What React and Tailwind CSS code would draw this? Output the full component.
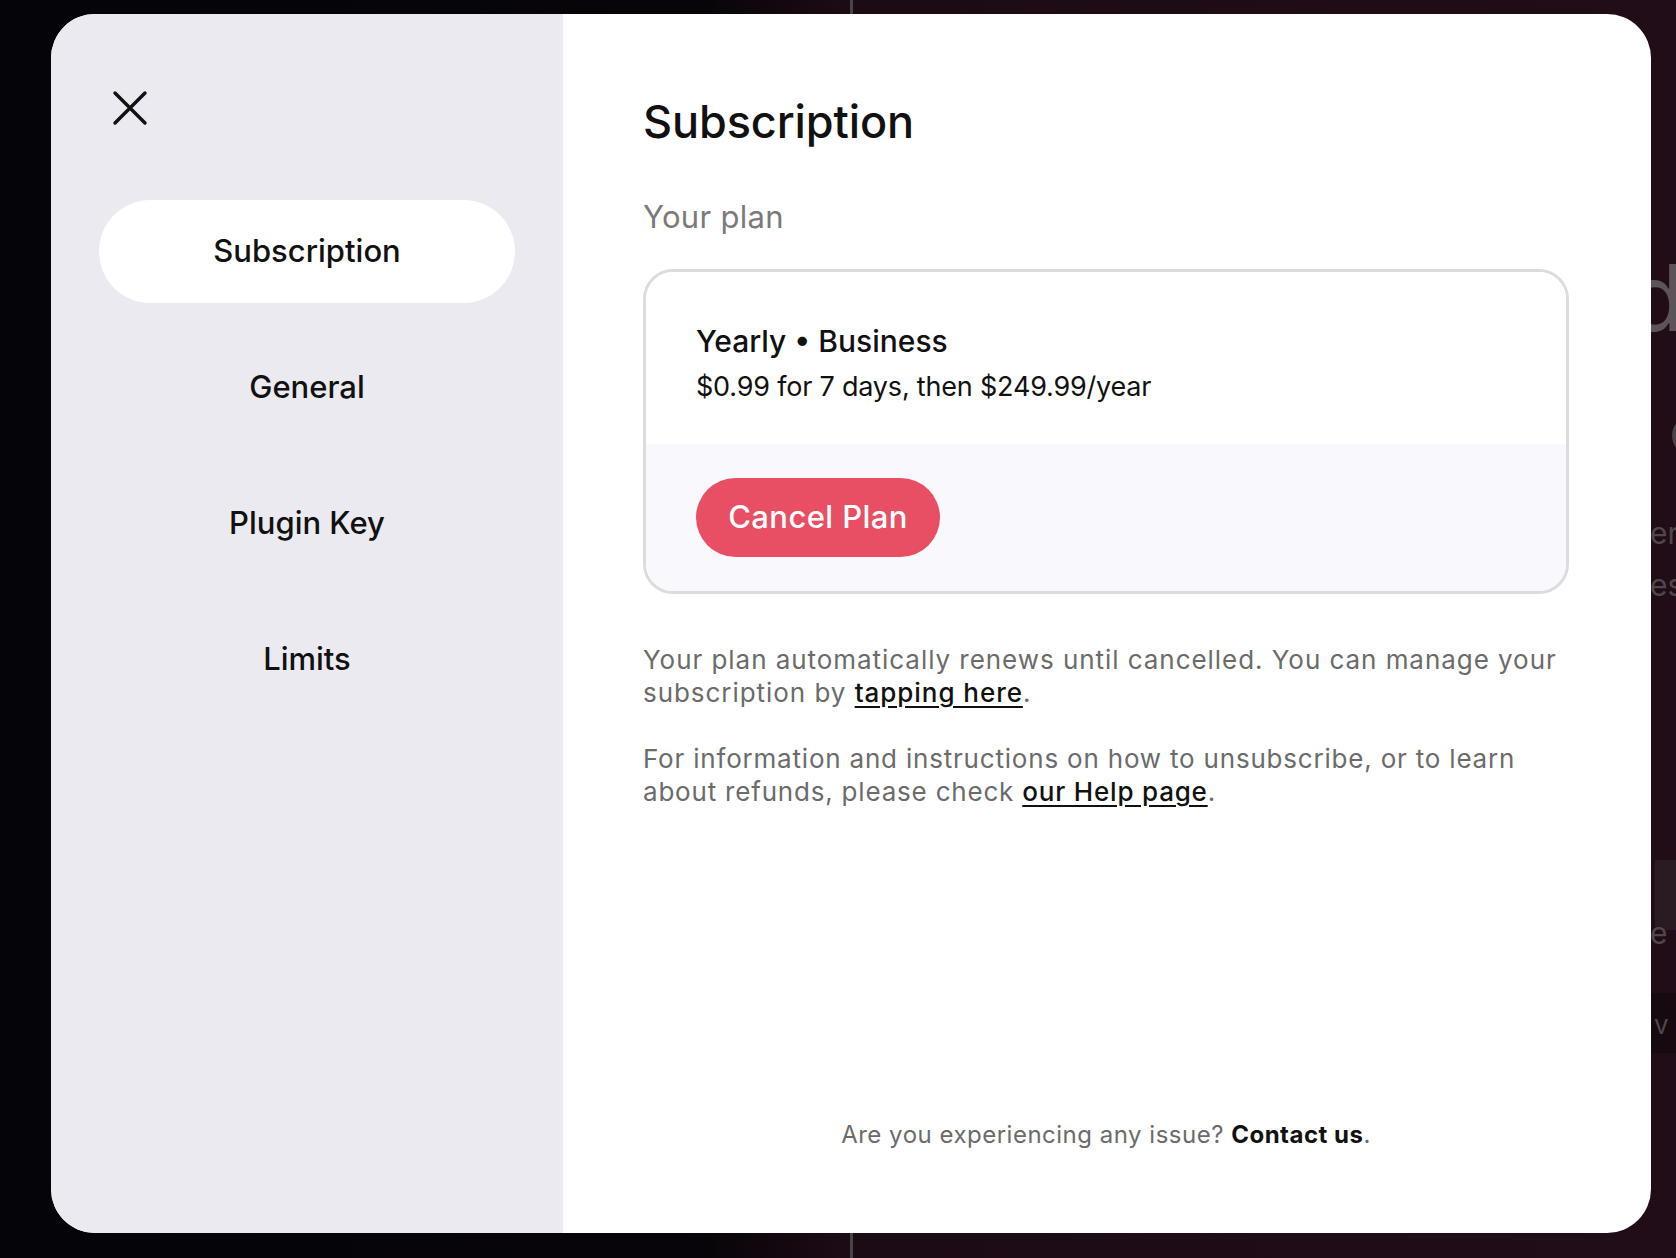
const navItems = ['Subscription', 'General', 'Plugin Key', 'Limits']

function CloseIcon() {
  return (
    <svg width="36" height="36" viewBox="0 0 36 36" fill="none">
      <path d="M3 3 33 33M33 3 3 33" stroke="#111" strokeWidth="3.4" strokeLinecap="round" />
    </svg>
  )
}

export default function App() {
  return (
    <div className="relative h-[1258px] w-full overflow-hidden bg-[linear-gradient(90deg,#050409_0%,#070509_42%,#1c0a14_50%,#200d17_100%)] font-['Inter','Noto_Sans',sans-serif]">
      {/* blurred page behind the dialog */}
      <div className="absolute left-[850px] top-0 h-full w-[3px] bg-[#4a4448]" />
      <div className="absolute left-[1628px] top-[252px] text-[92px] leading-none text-[#5c5459]">d</div>
      <div className="absolute left-[1669px] top-[400px] text-[60px] leading-none text-[#4a4246]">c</div>
      <div className="absolute left-[1650px] top-[518px] text-[30px] leading-none text-[#4f474c]">er</div>
      <div className="absolute left-[1650px] top-[570px] text-[30px] leading-none text-[#4f474c]">es</div>
      <div className="absolute left-[1655px] top-[860px] h-[70px] w-[21px] bg-[#2a1b22]" />
      <div className="absolute left-[1650px] top-[918px] text-[30px] leading-none text-[#4f474c]">e</div>
      <div className="absolute left-[1651px] top-[993px] h-[60px] w-[25px] bg-[#170910]" />
      <div className="absolute left-[1654px] top-[1012px] text-[26px] leading-none text-[#4f474c]">v</div>

      <div className="relative flex h-full flex-col pl-[51px] pr-[25px] pt-[14px] pb-[25px]">
        <div className="flex h-[1219px] w-[1600px] overflow-hidden rounded-[44px] bg-white">
          <aside className="flex w-[512px] shrink-0 flex-col bg-[#ebeaf0] px-[48px] pt-[76px]">
            <button className="ml-[13px] flex h-[36px] w-[36px] items-center justify-center">
              <CloseIcon />
            </button>
            <nav className="mt-[74px] flex flex-col gap-[33px]">
              {navItems.map((item, i) => (
                <div
                  key={item}
                  className={
                    i === 0
                      ? 'flex h-[103px] items-center justify-center rounded-full bg-white text-[31px] font-medium text-[#111]'
                      : 'flex h-[103px] items-center justify-center rounded-full text-[31px] font-medium text-[#111]'
                  }>
                  {item}
                </div>
              ))}
            </nav>
          </aside>

          <main className="flex flex-1 flex-col pl-[80px] pr-[82px] pt-[81px] pb-[83px]">
            <h1 className="text-[45px] font-medium leading-[54px] tracking-[-0.1px] text-[#111]">Subscription</h1>
            <h2 className="mt-[50px] text-[31px] leading-[36px] tracking-[0.3px] text-[#7a7a7a]">Your plan</h2>

            <div className="mt-[34px] overflow-hidden rounded-[30px] border-[3px] border-[#dcdcde]">
              <div className="bg-white px-[50px] pt-[51px] pb-[40px]">
                <div className="text-[30px] font-medium leading-[36px] text-[#111]">Yearly • Business</div>
                <div className="mt-[11px] text-[27px] leading-[34px] tracking-[-0.2px] text-[#111]">
                  $0.99 for 7 days, then $249.99/year
                </div>
              </div>
              <div className="bg-[#f9f8fc] px-[50px] py-[34px]">
                <button className="flex h-[79px] w-[244px] items-center justify-center rounded-full bg-[#e94f64] text-[31px] font-medium tracking-[0.4px] text-white">
                  Cancel Plan
                </button>
              </div>
            </div>

            <p className="mt-[49px] text-[26px] leading-[33px] tracking-[0.95px] text-[#6b6b6b]">
              Your plan automatically renews until cancelled. You can manage your subscription by{' '}
              <a className="font-medium text-[#111] underline underline-offset-[4px]">tapping here</a>.
            </p>
            <p className="mt-[33px] text-[26px] leading-[33px] tracking-[0.8px] text-[#6b6b6b]">
              For information and instructions on how to unsubscribe, or to learn about refunds, please check{' '}
              <a className="font-medium text-[#111] underline underline-offset-[4px]">our Help page</a>.
            </p>

            <div className="mt-auto text-center text-[24px] leading-[30px] tracking-[0.5px] text-[#6b6b6b]">
              Are you experiencing any issue? <span className="font-bold text-[#111]">Contact us</span>.
            </div>
          </main>
        </div>
      </div>
    </div>
  )
}
